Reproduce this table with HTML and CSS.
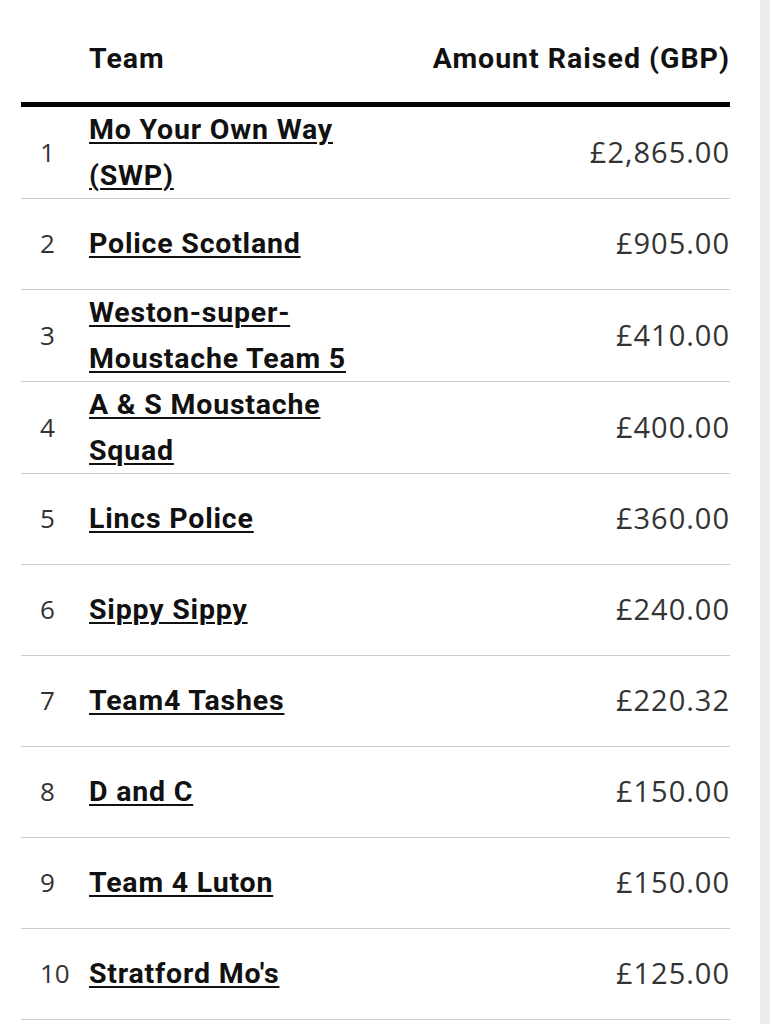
FILE: index.html
```html
<!DOCTYPE html>
<html lang="en">
<head>
<meta charset="utf-8">
<title>Leaderboard</title>
<link rel="stylesheet" href="styles.css">
</head>
<body>
<div class="page">
  <main class="content">
    <table class="board">
      <thead>
        <tr>
          <th class="rank"></th>
          <th class="team">Team</th>
          <th class="amount">Amount Raised (GBP)</th>
        </tr>
      </thead>
      <tbody>
        <tr><td class="rank">1</td><td class="team"><a href="#">Mo Your Own Way (SWP)</a></td><td class="amount">£2,865.00</td></tr>
        <tr><td class="rank">2</td><td class="team"><a href="#">Police Scotland</a></td><td class="amount">£905.00</td></tr>
        <tr><td class="rank">3</td><td class="team"><a href="#">Weston-super-Moustache Team 5</a></td><td class="amount">£410.00</td></tr>
        <tr><td class="rank">4</td><td class="team"><a href="#">A &amp; S Moustache Squad</a></td><td class="amount">£400.00</td></tr>
        <tr><td class="rank">5</td><td class="team"><a href="#">Lincs Police</a></td><td class="amount">£360.00</td></tr>
        <tr><td class="rank">6</td><td class="team"><a href="#">Sippy Sippy</a></td><td class="amount">£240.00</td></tr>
        <tr><td class="rank">7</td><td class="team"><a href="#">Team4 Tashes</a></td><td class="amount">£220.32</td></tr>
        <tr><td class="rank">8</td><td class="team"><a href="#">D and C</a></td><td class="amount">£150.00</td></tr>
        <tr><td class="rank">9</td><td class="team"><a href="#">Team 4 Luton</a></td><td class="amount">£150.00</td></tr>
        <tr><td class="rank">10</td><td class="team"><a href="#">Stratford Mo's</a></td><td class="amount">£125.00</td></tr>
      </tbody>
    </table>
  </main>
  <div class="rail"></div>
</div>
</body>
</html>
```

FILE: styles.css
```css
html, body {
  margin: 0;
  padding: 0;
  background: #fff;
}

body {
  font-family: Roboto, "Liberation Sans", sans-serif;
  color: #111;
}

.page {
  display: flex;
  min-height: 1024px;
}

.content {
  width: 709px;
  padding: 0 30px 0 21px;
  flex: none;
}

.rail {
  flex: 1;
  background: #ececec;
}

.board {
  width: 100%;
  border-collapse: collapse;
  font-size: 28.5px;
  line-height: 45.5px;
}

.board th {
  font-weight: 700;
  color: #111;
  letter-spacing: 1px;
  padding: 36px 0 20.5px;
  border-bottom: 5px solid #000;
  text-align: left;
}

.board th.amount {
  text-align: right;
}

.board td {
  height: 90px;
  padding: 0;
  border-bottom: 1px solid #cdcdcd;
  vertical-align: middle;
}

.board .rank {
  width: 49px;
  padding-left: 19px;
}

.board td.rank {
  padding-left: 19px;
  font-family: "Open Sans", sans-serif;
  font-size: 26px;
  color: #333;
  font-weight: 400;
}

.board .team {
  width: 300px;
}

.board td.team a {
  color: #111;
  font-weight: 700;
  letter-spacing: 0.8px;
  text-decoration: underline;
  text-decoration-thickness: 2px;
  text-underline-offset: 3px;
}

.board td.amount {
  text-align: right;
  font-family: "Open Sans", sans-serif;
  font-size: 29px;
  letter-spacing: 1px;
  color: #333;
  font-weight: 400;
  position: relative;
  top: -1px;
}
```
